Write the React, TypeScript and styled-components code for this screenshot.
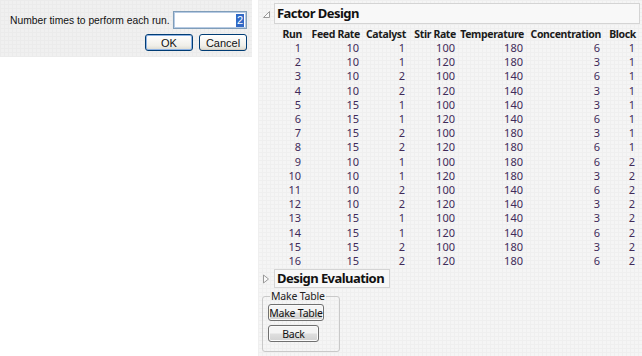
import React from "react";
import styled, { createGlobalStyle } from "styled-components";

const GlobalStyle = createGlobalStyle`
  html, body {
    margin: 0;
    padding: 0;
    background: #ffffff;
  }
`;

const Page = styled.div`
  display: flex;
  width: 642px;
  height: 356px;
  overflow: hidden;
  font-family: "Noto Sans", "Open Sans", sans-serif;
`;

const LeftCol = styled.div`
  width: 258px;
  flex: none;
`;

const Dialog = styled.div`
  width: 252px;
  height: 57px;
  box-sizing: border-box;
  padding: 11px 5px 0 10px;
  background-color: #f0f0f0;
  background-image: linear-gradient(#ebebeb 1px, transparent 1px),
    linear-gradient(90deg, #ebebeb 1px, transparent 1px);
  background-size: 4px 4px;
  font-family: "Liberation Sans", Arial, sans-serif;
  font-size: 10.3px;
  color: #111;
`;

const PromptRow = styled.div`
  display: flex;
  align-items: center;
  justify-content: space-between;
  white-space: nowrap;
`;

const NumberInput = styled.div`
  width: 74px;
  height: 18px;
  flex: none;
  box-sizing: border-box;
  border: 1px solid #7f9db9;
  box-shadow: inset 0 0 0 1px #b7cbe4;
  background: #fff;
  display: flex;
  align-items: center;
  justify-content: flex-end;
  padding-right: 2px;
  font-size: 11px;
  .sel {
    background: #3169c6;
    color: #fff;
    padding: 0 1px;
    line-height: 13px;
  }
`;

const ButtonRow = styled.div`
  display: flex;
  justify-content: flex-end;
  gap: 6px;
  margin-top: 5px;
`;

const XpButton = styled.button<{ $default?: boolean }>`
  width: 48px;
  height: 17px;
  box-sizing: border-box;
  padding: 0;
  border: 1px solid #003c74;
  border-radius: 3px;
  background: linear-gradient(#ffffff, #f0efe9 70%, #dcdad0);
  box-shadow: ${(p) =>
    p.$default ? "inset 0 0 0 1px #8db2e3" : "inset 0 -1px 0 #d6d0c5"};
  font-family: "Liberation Sans", Arial, sans-serif;
  font-size: 11px;
  color: #111;
  white-space: nowrap;
`;

const RightPanel = styled.div`
  flex: 1;
  height: 356px;
  box-sizing: border-box;
  padding: 3px 2px 0 1px;
  background-color: #f5f5f5;
  background-image: linear-gradient(#efefef 1px, transparent 1px),
    linear-gradient(90deg, #efefef 1px, transparent 1px);
  background-size: 4px 4px;
`;

const OutlineHead = styled.div`
  display: flex;
  align-items: center;
  gap: 4px;
`;

const Toggle = styled.svg`
  width: 8px;
  height: 10px;
  flex: none;
  margin-left: 3px;
`;

const TitleBox = styled.div<{ $wide?: boolean }>`
  ${(p) => (p.$wide ? "flex: 1; height: 21px;" : "width: 116px; height: 19px;")}
  box-sizing: border-box;
  border: 1px solid #d4d4d4;
  background: #f8f8f8;
  padding-left: 2px;
  font-weight: 700;
  font-size: 13px;
  letter-spacing: -0.55px;
  line-height: ${(p) => (p.$wide ? "19px" : "17px")};
  color: #111;
  white-space: nowrap;
  overflow: hidden;
`;

const Table = styled.div`
  display: grid;
  grid-template-columns: 30px 58px 46px 50px 68px 77px 35px;
  margin-left: 13px;
  margin-top: 3px;
  font-size: 11px;
`;

const HeadCell = styled.div`
  text-align: right;
  font-weight: 700;
  font-size: 10.5px;
  color: #1b1b1b;
  line-height: 14px;
  white-space: nowrap;
  letter-spacing: -0.35px;
`;

const Cell = styled.div`
  text-align: right;
  color: #3f2b5a;
  line-height: 14.2px;
  padding-right: 1px;
`;

const Section = styled.div`
  margin-top: 1px;
`;

const Fieldset = styled.fieldset`
  width: 78px;
  height: 61px;
  box-sizing: border-box;
  margin: 3px 0 0 3px;
  padding: 3px 0 0 5px;
  border: 1px solid #c9c9c9;
  border-radius: 3px;
  display: flex;
  flex-direction: column;
  align-items: flex-start;
  gap: 4px;
  legend {
    font-size: 10.5px;
    letter-spacing: -0.2px;
    color: #222;
    padding: 0 1px;
    margin-left: 2px;
    line-height: 10px;
    white-space: nowrap;
  }
`;

const WinButton = styled.button<{ $w: number }>`
  width: ${(p) => p.$w}px;
  height: 17px;
  box-sizing: border-box;
  padding: 0;
  border: 1px solid #707070;
  border-radius: 3px;
  background: linear-gradient(#f4f4f4 45%, #dedede 55%, #d2d2d2);
  box-shadow: inset 0 0 0 1px #fbfbfb;
  font-family: "Noto Sans", "Open Sans", sans-serif;
  font-size: 10.5px;
  letter-spacing: -0.2px;
  color: #111;
  line-height: 14px;
  white-space: nowrap;
`;

const columns = [
  "Run",
  "Feed Rate",
  "Catalyst",
  "Stir Rate",
  "Temperature",
  "Concentration",
  "Block",
];

const rows: number[][] = [
  [1, 10, 1, 100, 180, 6, 1],
  [2, 10, 1, 120, 180, 3, 1],
  [3, 10, 2, 100, 140, 6, 1],
  [4, 10, 2, 120, 140, 3, 1],
  [5, 15, 1, 100, 140, 3, 1],
  [6, 15, 1, 120, 140, 6, 1],
  [7, 15, 2, 100, 180, 3, 1],
  [8, 15, 2, 120, 180, 6, 1],
  [9, 10, 1, 100, 180, 6, 2],
  [10, 10, 1, 120, 180, 3, 2],
  [11, 10, 2, 100, 140, 6, 2],
  [12, 10, 2, 120, 140, 3, 2],
  [13, 15, 1, 100, 140, 3, 2],
  [14, 15, 1, 120, 140, 6, 2],
  [15, 15, 2, 100, 180, 3, 2],
  [16, 15, 2, 120, 180, 6, 2],
];

const Disclosure: React.FC<{ open?: boolean }> = ({ open }) => (
  <Toggle viewBox="0 0 8 10">
    {open ? (
      <polygon points="7.5,2.5 7.5,8.5 1.5,8.5" fill="#fafafa" stroke="#9a9a9a" strokeWidth="1" />
    ) : (
      <polygon points="1.5,1 6.5,5 1.5,9" fill="#fafafa" stroke="#9a9a9a" strokeWidth="1" />
    )}
  </Toggle>
);

const App: React.FC = () => {
  return (
    <Page>
      <GlobalStyle />
      <LeftCol>
        <Dialog>
          <PromptRow>
            <span>Number times to perform each run.</span>
            <NumberInput>
              <span className="sel">2</span>
            </NumberInput>
          </PromptRow>
          <ButtonRow>
            <XpButton $default>OK</XpButton>
            <XpButton>Cancel</XpButton>
          </ButtonRow>
        </Dialog>
      </LeftCol>
      <RightPanel>
        <OutlineHead>
          <Disclosure open />
          <TitleBox $wide>Factor Design</TitleBox>
        </OutlineHead>
        <Table>
          {columns.map((c) => (
            <HeadCell key={c}>{c}</HeadCell>
          ))}
          {rows.map((r) =>
            r.map((v, i) => <Cell key={`${r[0]}-${i}`}>{v}</Cell>)
          )}
        </Table>
        <Section>
          <OutlineHead>
            <Disclosure />
            <TitleBox>Design Evaluation</TitleBox>
          </OutlineHead>
        </Section>
        <Fieldset>
          <legend>Make Table</legend>
          <WinButton $w={56}>Make Table</WinButton>
          <WinButton $w={51}>Back</WinButton>
        </Fieldset>
      </RightPanel>
    </Page>
  );
};

export default App;
